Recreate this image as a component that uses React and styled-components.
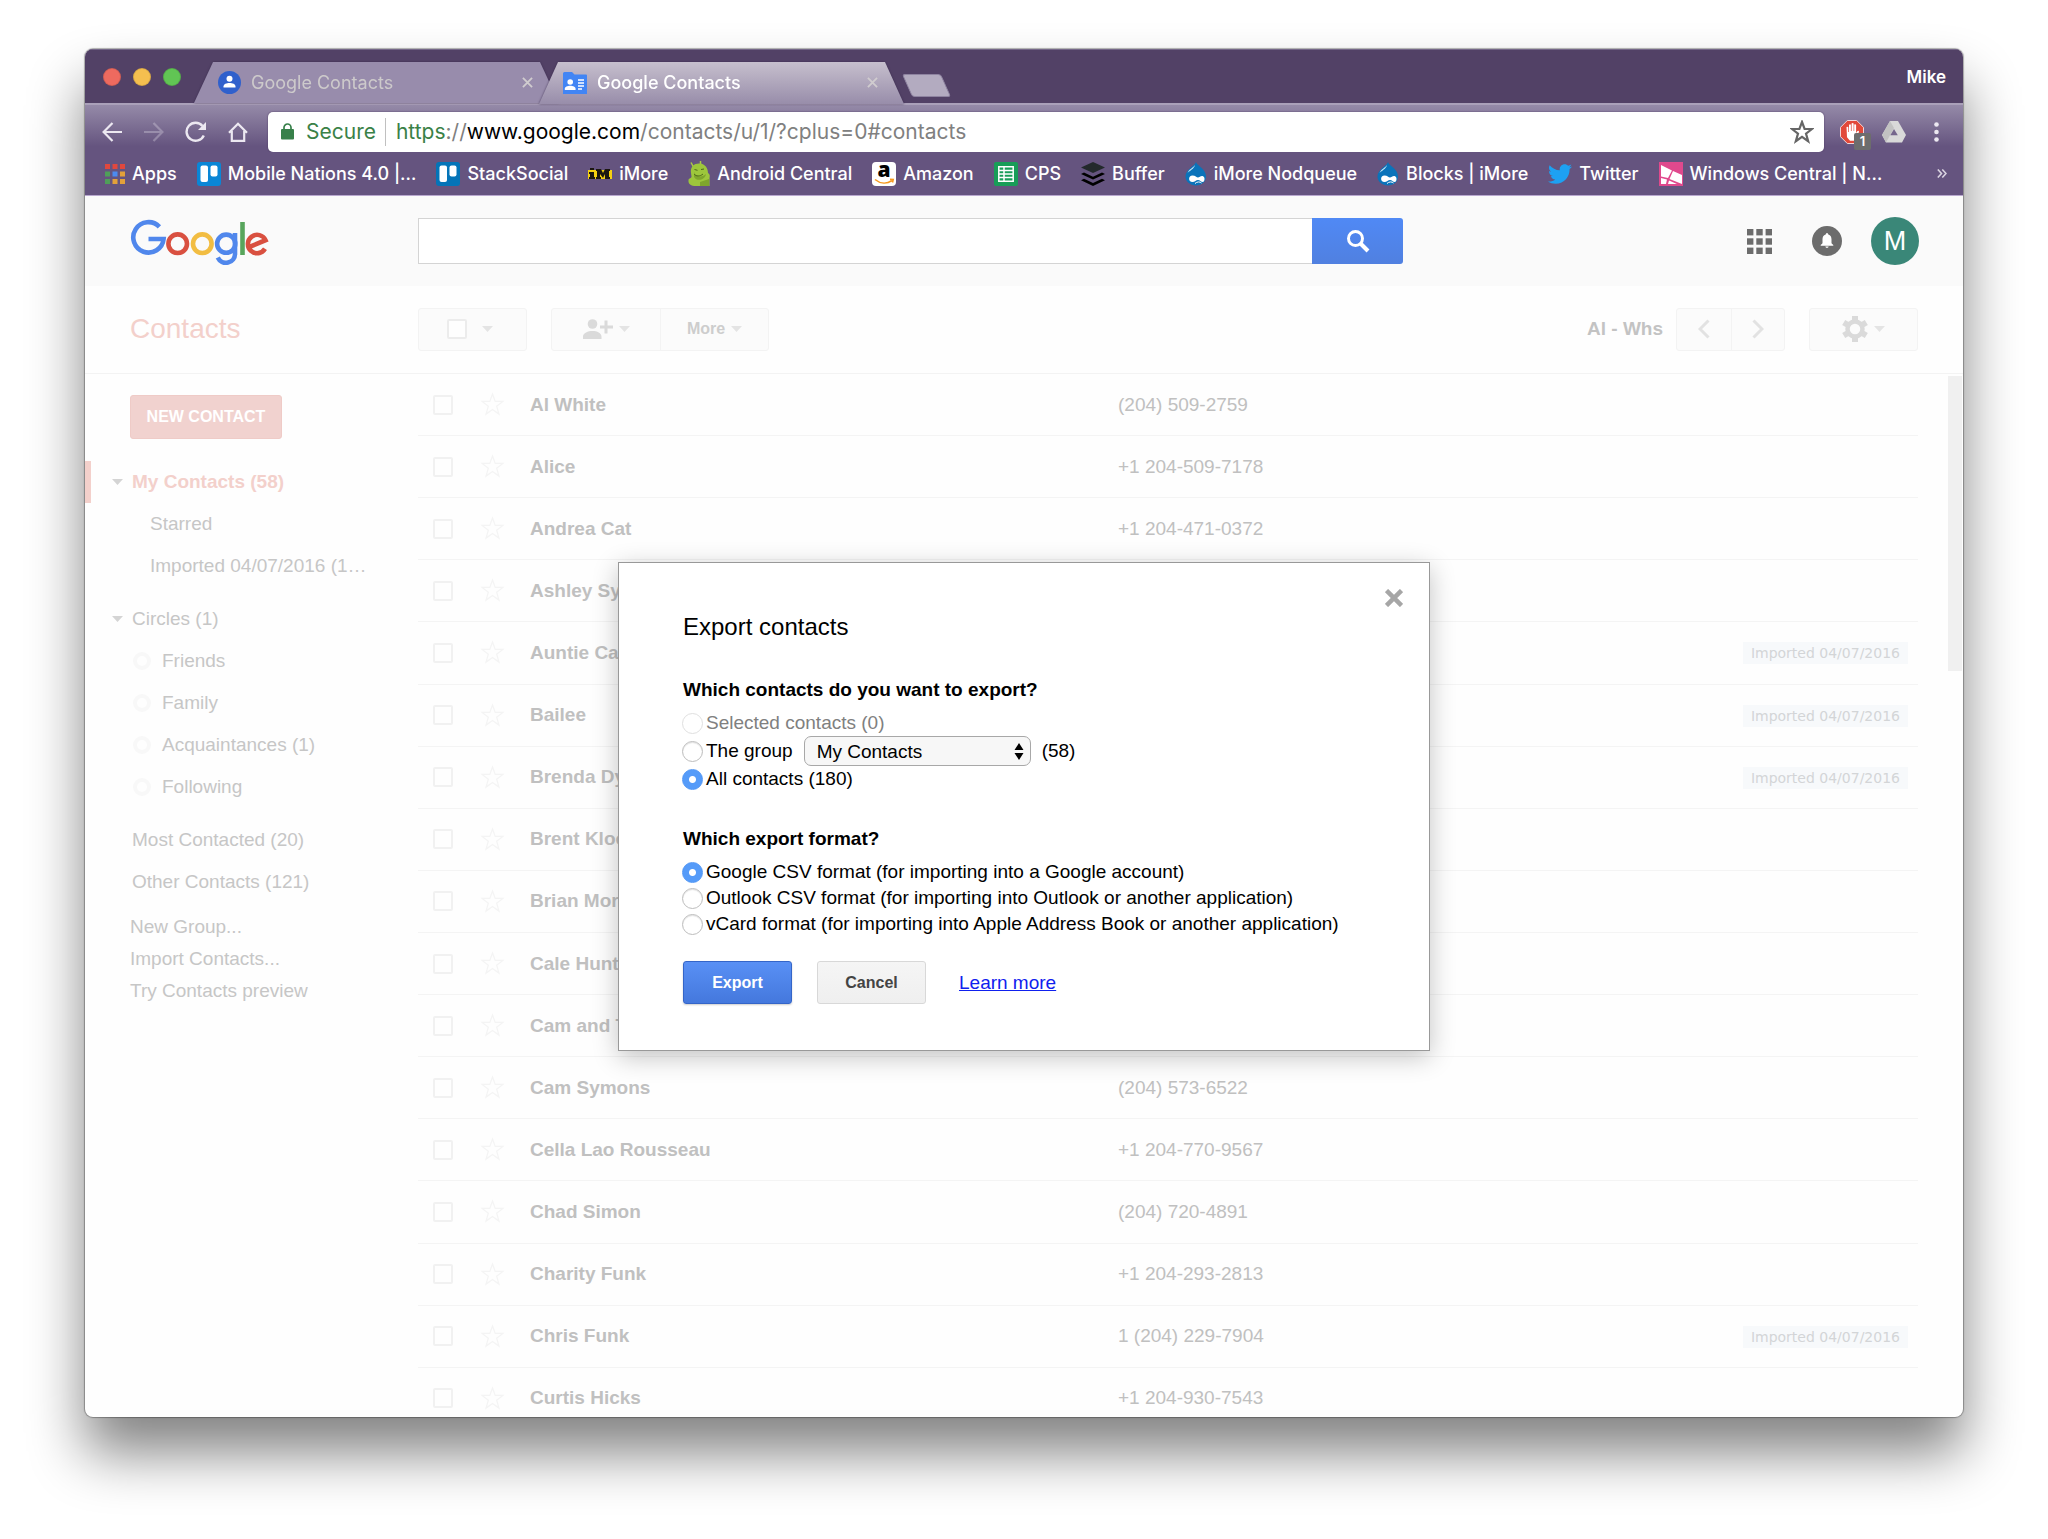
import React from "react";
import styled, { createGlobalStyle, css } from "styled-components";
import { FaTwitter } from "react-icons/fa";

const sans = `"Liberation Sans", Arial, sans-serif`;
const ui = `Inter, Roboto, sans-serif`;

const GlobalStyle = createGlobalStyle`
  *, *::before, *::after { box-sizing: border-box; }
  html, body { margin: 0; background: #fff; }
  body { font-family: ${sans}; font-size: 19px; color: #000; }
  button, input, select { font: inherit; margin: 0; }
  a { color: inherit; text-decoration: none; }
  h1, h2, h3, p, ul { margin: 0; padding: 0; font-weight: normal; }
  ul { list-style: none; }
  svg { display: block; flex: none; }
`;

/* ---------- window ---------- */

const Desktop = styled.div`
  height: 100vh;
  min-height: 1100px;
  padding: 49px 85px 122px;
  overflow: hidden;
`;

const Window = styled.div`
  display: flex;
  flex-direction: column;
  height: 100%;
  border-radius: 8px;
  overflow: hidden;
  background: #fefefe;
  box-shadow: 0 0 1px 1px rgba(0, 0, 0, 0.3), 0 36px 56px rgba(0, 0, 0, 0.49);
`;

const TitleBar = styled.header`
  display: flex;
  align-items: flex-end;
  height: 54px;
  flex: none;
  padding: 0 17px 0 18px;
  background: #524166;
  border-top: 1px solid #746788;
  font-family: ${ui};
  font-size: 18px;
`;

const Lights = styled.div`
  display: flex;
  gap: 12px;
  align-self: center;
  margin-right: 13px;
`;

const Light = styled.button`
  width: 18px;
  height: 18px;
  padding: 0;
  border: 1px solid rgba(0, 0, 0, 0.12);
  border-radius: 50%;
  background: ${(p) => p.$color};
`;

const Tab = styled.div`
  position: relative;
  isolation: isolate;
  display: flex;
  align-items: center;
  gap: 10px;
  width: 365px;
  height: 41px;
  padding: 0 26px 0 24px;
  color: ${(p) => (p.$active ? "#fff" : "#cdcacb")};
  filter: drop-shadow(0 0 1px rgba(50, 35, 70, 0.7));

  & + & {
    margin-left: -20px;
  }

  &::before {
    content: "";
    position: absolute;
    inset: 0 0 ${(p) => (p.$active ? "-1px" : "0")} 0;
    z-index: -1;
    background: ${(p) => (p.$active ? "linear-gradient(#c6bfcd, #988daa)" : "#988cac")};
    clip-path: polygon(0 100%, 19px 0, calc(100% - 19px) 0, 100% 100%);
  }
`;

const TabTitle = styled.span`
  flex: 1;
  font-weight: ${(p) => (p.$active ? 500 : 400)};
`;

const PlainButton = styled.button`
  display: flex;
  align-items: center;
  justify-content: center;
  padding: 0;
  border: 0;
  background: none;
  color: inherit;
`;

const NewTab = styled.button`
  width: 39px;
  height: 23px;
  margin: 0 0 6px 3px;
  padding: 0;
  border: 1px solid #8e83a0;
  border-radius: 3px;
  background: #b3abc0;
  transform: skewX(24deg);
`;

const Profile = styled.span`
  margin-left: auto;
  align-self: center;
  color: #fff;
  font-size: 17px;
  font-weight: 600;
`;

const NavBar = styled.nav`
  display: flex;
  align-items: center;
  flex: none;
  height: 49px;
  padding: 6px 6px 0;
  background: linear-gradient(#958aa8, #65547f 88%);
  border-top: 2px solid #aaa0b9;
  font-family: ${ui};
  font-size: 21px;
  color: #ece8f1;
  white-space: nowrap;
`;

const NavButton = styled(PlainButton)`
  width: 42px;
  height: 40px;
  flex: none;
  opacity: ${(p) => (p.disabled ? 0.3 : 1)};
  color: inherit;
`;

const AddressBar = styled.div`
  display: flex;
  align-items: center;
  flex: 1;
  height: 40px;
  margin: 0 7px 0 9px;
  padding: 0 10px 0 13px;
  border-radius: 5px;
  background: #fff;
  box-shadow: 0 0 1px 1px rgba(80, 60, 100, 0.3);
  line-height: 28px;
`;

const Secure = styled.span`
  padding: 0 9px 0 12px;
  margin-right: 10px;
  border-right: 1px solid #c0c0c0;
  color: #3a8147;
`;

const Address = styled.span`
  flex: 1;
  color: #808080;

  b {
    font-weight: 400;
    color: #000;
  }
  i {
    font-style: normal;
    color: #3a8147;
  }
`;

const Blocker = styled(NavButton)`
  position: relative;
`;

const Count = styled.span`
  position: absolute;
  right: 2px;
  bottom: 2px;
  width: 17px;
  height: 17px;
  border-radius: 2px;
  background: #6d6d6d;
  color: #fff;
  font-size: 13px;
  font-weight: 600;
  line-height: 17px;
`;

const Bookmarks = styled.nav`
  display: flex;
  align-items: center;
  flex: none;
  height: 44px;
  padding: 0 16px 0 20px;
  background: #65547f;
  border-bottom: 1px solid #b9a8cf;
  font-family: ${ui};
  font-size: 18px;
  font-weight: 500;
  color: #fff;
  white-space: nowrap;
`;

const Bookmark = styled.a`
  display: flex;
  align-items: center;
  gap: 7px;
  margin-right: 20px;
`;

const MoreBookmarks = styled(PlainButton)`
  margin-left: auto;
`;

/* ---------- page ---------- */

const Page = styled.div`
  position: relative;
  display: flex;
  flex-direction: column;
  flex: 1;
  min-height: 0;
`;

const PageHeader = styled.header`
  display: flex;
  align-items: center;
  flex: none;
  height: 90px;
  padding-right: 44px;
  background: #fafafa;
`;

const Side = styled.div`
  width: 333px;
  flex: none;
  padding-left: 45px;
`;

const Search = styled.form`
  display: flex;
  flex: 0 1 985px;
  height: 46px;
`;

const SearchInput = styled.input`
  flex: 1;
  min-width: 0;
  padding: 0 12px;
  border: 1px solid #d4d4d4;
  border-right: 0;
  outline: 0;
  background: #fff;
`;

const SearchButton = styled(PlainButton)`
  width: 91px;
  border-radius: 0 3px 3px 0;
  background: linear-gradient(#5089f5, #5080e0);
  color: #fff;
`;

const Account = styled.div`
  display: flex;
  gap: 20px;
  margin-left: auto;
`;

const RoundButton = styled(PlainButton)`
  width: 48px;
  height: 48px;
  border-radius: 50%;
  background: ${(p) => p.$fill || "none"};
  color: #fff;
  font-size: 27px;
`;

const Toolbar = styled.div`
  display: flex;
  align-items: center;
  flex: none;
  height: 88px;
  padding: 0 45px 1px 0;
  border-bottom: 1px solid #f3f3f3;
`;

const PageTitle = styled.h1`
  font-size: 28px;
  color: #f3d0cb;
`;

const Group = styled.div`
  display: flex;
  align-items: center;
  justify-content: center;
  height: 43px;
  min-width: 109px;
  margin-right: ${(p) => p.$after || 0}px;
  border: 1px solid #f3f3f3;
  border-radius: 3px;
  background: #fbfbfb;
  color: #cdcdcd;
`;

const GroupButton = styled(PlainButton)`
  gap: 6px;
  width: ${(p) => p.$width}px;
  height: 100%;
  font-size: 16px;
  font-weight: bold;

  & + & {
    border-left: 1px solid #f3f3f3;
  }
`;

const CaretButton = styled(PlainButton)`
  height: 100%;
  padding-right: 6px;
`;

const Range = styled.span`
  margin: 0 13px 0 auto;
  font-weight: bold;
  color: #c3c3c3;
`;

const Check = styled.input`
  appearance: none;
  display: block;
  width: 20px;
  height: 20px;
  border: 2px solid #f1f1f1;
  border-radius: 2px;
  background: #fefefe;
`;

const SelectAll = styled(Check)`
  margin-right: 15px;
  border-color: #ececec;
`;

const Body = styled.div`
  position: relative;
  display: flex;
  flex: 1;
  min-height: 0;
  overflow: hidden;
`;

const Sidebar = styled.aside`
  width: 333px;
  flex: none;
  padding-top: 21px;
  color: #c6c6c6;
`;

const NewContact = styled.button`
  height: 44px;
  width: 152px;
  margin: 0 0 22px 45px;
  padding: 0;
  border: 1px solid #efcbc7;
  border-radius: 3px;
  background: #f1d2cf;
  color: #fff;
  font-size: 16px;
  font-weight: bold;
`;

const NavList = styled.ul`
  margin-bottom: ${(p) => p.$after}px;
`;

const NavItem = styled.li`
  display: flex;
  align-items: center;
  height: ${(p) => (p.$short ? 32 : 42)}px;
  padding-left: ${(p) => p.$indent}px;
  ${(p) =>
    p.$current &&
    css`
      padding-left: 21px;
      border-left: 6px solid #f3d0cb;
      font-weight: bold;
      color: #f3d0cb;
    `}
`;

const Twisty = styled.svg`
  margin-right: 9px;
  color: #d4d4d4;
`;

const Ring = styled.span`
  width: 18px;
  height: 18px;
  margin-right: 11px;
  border: 4px solid #f8f8f8;
  border-radius: 50%;
`;

const List = styled.main`
  flex: 1;
  min-width: 0;
  margin-right: 45px;
`;

const Table = styled.table`
  width: 100%;
  height: calc(100% + 13px);
  border-spacing: 0;
  table-layout: fixed;
  color: #c0c0c0;

  td {
    padding: 0;
    border-bottom: 1px solid #f4f4f4;
  }
`;

const Name = styled.td`
  font-weight: bold;
`;

const CheckCell = styled.td`
  && {
    padding-left: 15px;
  }
`;

const TagCell = styled.td`
  && {
    padding-right: 10px;
    text-align: right;
  }
`;

const Tag = styled.span`
  display: inline-block;
  padding: 0 8px;
  background: #f7f9fb;
  color: #d3d5d7;
  font-family: "DejaVu Sans", sans-serif;
  font-size: 14px;
  line-height: 22px;
  vertical-align: middle;
`;

const ScrollThumb = styled.div`
  position: absolute;
  top: 2px;
  right: 1px;
  width: 14px;
  height: 295px;
  background: #f0f0f0;
`;

/* ---------- dialog ---------- */

const Overlay = styled.div`
  position: absolute;
  inset: 0;
  display: grid;
  place-items: center;
`;

const Dialog = styled.form`
  position: relative;
  width: 812px;
  padding: 48px 64px 46px;
  border: 1px solid #999;
  background: #fff;
  box-shadow: 0 6px 24px rgba(0, 0, 0, 0.24);
`;

const Close = styled(PlainButton)`
  position: absolute;
  top: 26px;
  right: 26px;
  width: 18px;
  height: 18px;
`;

const DialogTitle = styled.h2`
  font-size: 24px;
  line-height: 32px;
`;

const Choices = styled.fieldset`
  min-width: 0;
  margin: 35px 0 0;
  padding: 0;
  border: 0;
`;

const Question = styled.legend`
  padding: 0;
  margin-bottom: 8px;
  font-weight: bold;
  line-height: 24px;
`;

const Choice = styled.div`
  display: flex;
  align-items: center;
  height: ${(p) => (p.$tall ? 30 : 26)}px;
  color: ${(p) => (p.$off ? "#808080" : "#000")};
`;

const Radio = styled.input`
  appearance: none;
  width: 21px;
  height: 21px;
  flex: none;
  margin: 0 3px 0 -1px;
  border: 1px solid #bdbdbd;
  border-radius: 50%;
  background: #fff;
  box-shadow: inset 0 1px 1px rgba(0, 0, 0, 0.12);

  &:checked {
    border-color: #5096f5;
    background: radial-gradient(circle, #fff 3px, #559bf9 4px);
    box-shadow: none;
  }

  &:disabled {
    border-color: #e0e0e0;
    box-shadow: none;
  }
`;

const SelectWrap = styled.div`
  position: relative;
  width: 227px;
  margin: 0 11px;

  svg {
    position: absolute;
    top: 7px;
    right: 7px;
    pointer-events: none;
  }
`;

const Select = styled.select`
  appearance: none;
  display: block;
  width: 100%;
  height: 30px;
  padding: 0 12px;
  border: 1px solid #a8a8a8;
  border-radius: 7px;
  background: #f7f7f7;
  color: #000;
`;

const Actions = styled.div`
  display: flex;
  align-items: center;
  margin-top: 24px;
`;

const ActionButton = styled.button`
  width: 109px;
  height: 43px;
  margin-right: 25px;
  padding: 0;
  border-radius: 3px;
  font-size: 16px;
  font-weight: bold;
  ${(p) =>
    p.$primary
      ? css`
          border: 1px solid #3465c8;
          background: linear-gradient(#5990f5, #4478dd);
          color: #fff;
          box-shadow: 0 1px 2px rgba(0, 0, 0, 0.2);
        `
      : css`
          border: 1px solid #d8d8d8;
          background: linear-gradient(#f5f5f5, #efefef);
          color: #444;
        `}
`;

const Learn = styled.a`
  margin-left: 8px;
  color: #0f20ee;
  text-decoration: underline;
`;

/* ---------- drawings ---------- */

const CrossIcon = ({ size = 11, width = 2, color = "#d0cccf" }) => (
  <svg width={size} height={size} viewBox="0 0 12 12" stroke={color} strokeWidth={width}>
    <path d="M1 1l10 10M11 1L1 11" />
  </svg>
);

const Caret = ({ color = "#e4e4e4" }) => (
  <svg width="11" height="6" viewBox="0 0 11 6" fill={color}>
    <path d="M0 0h11L5.500 6z" />
  </svg>
);

const GoogleLogo = () => (
  <svg width="140" height="50" viewBox="0 -3 140 50" fill="none" strokeWidth="4.600" role="img" aria-label="Google">
    <path stroke="#5087ec" d="M29.400 7.800A15.200 15.200 0 1 0 33.600 20H18.500" />
    <circle stroke="#d95040" cx="47.700" cy="24.700" r="9.300" />
    <circle stroke="#f2bd42" cx="72.300" cy="24.700" r="9.300" />
    <circle stroke="#5087ec" cx="96.200" cy="24.700" r="9.100" />
    <path stroke="#5087ec" d="M105 14v20.500a9 9 0 0 1-17.200 4" />
    <path stroke="#58a55c" d="M112.500 3v33" />
    <path stroke="#d95040" d="M118.900 28.200l16.600-7A9.200 9.200 0 1 0 135 29.800" />
  </svg>
);

const PersonIcon = () => (
  <svg width="23" height="23" viewBox="0 0 23 23">
    <circle cx="11.500" cy="11.500" r="11.500" fill="#3060cc" />
    <circle cx="11.500" cy="7.800" r="3" fill="#fff" />
    <path fill="#fff" d="M5.500 16.500v-1c0-2.400 3-3.500 6-3.500s6 1.100 6 3.500v1z" />
  </svg>
);

const FolderIcon = () => (
  <svg width="24" height="22" viewBox="0 0 24 22">
    <path fill="#4285f4" d="M0 1.500Q0 0 1.500 0H9l2.500 2.500H23q1 0 1 1V22H0z" />
    <circle cx="7.200" cy="10" r="2.800" fill="#fff" />
    <path fill="#fff" d="M1.800 18v-1.200c0-2 2.700-3 5.400-3s5.400 1 5.400 3V18zM15 7.200h6v1.600h-6zM15 10.200h6v1.600h-6zM15 13.200h6v1.600h-6zM15 16.200h4v1.600h-4z" />
  </svg>
);

const grid9 = [0, 1, 2, 3, 4, 5, 6, 7, 8];

const AppsIcon = () => {
  const colors = ["#e0483e", "#e0483e", "#e0483e", "#4f9f59", "#4c8bf0", "#e3a13a", "#4f9f59", "#e3a13a", "#e3a13a"];
  return (
    <svg width="20" height="20" viewBox="0 0 20 20">
      {grid9.map((i) => (
        <rect key={i} x={(i % 3) * 7.5} y={Math.floor(i / 3) * 7.5} width="5" height="5" fill={colors[i]} />
      ))}
    </svg>
  );
};

const GridIcon = () => (
  <svg width="25" height="25" viewBox="0 0 25 25" fill="#6c6c6c">
    {grid9.map((i) => (
      <rect key={i} x={(i % 3) * 9.3} y={Math.floor(i / 3) * 9.3} width="6.400" height="6.400" />
    ))}
  </svg>
);

const BoardIcon = ({ dark }) => (
  <svg width="24" height="24" viewBox="0 0 24 24">
    <rect width="24" height="24" rx="3" fill={dark ? "#0474b8" : "#0a86d6"} />
    <rect x="3.500" y="3.500" width="7.500" height="16.500" rx="2" fill="#fff" />
    <rect x="13.500" y="3.500" width="7" height="11" rx="2" fill="#fff" />
  </svg>
);

const ImoreIcon = () => (
  <svg width="24" height="12" viewBox="0 0 24 12" aria-hidden="true">
    <rect y="2" width="24" height="9" fill="#f5d010" />
    <path fill="#1c1710" d="M2 0h4v2H2zM1 4h5v5h1v2H1V9h1V6H1zM8 1h5l2 4 2-4h5v2h-1v6h1v2h-5V6l-2 4-3-4v3h1v2H8V9h1V3H8z" />
  </svg>
);

const AndroidIcon = () => (
  <svg width="22" height="25" viewBox="0 0 22 25">
    <path d="M5.500 6L3 1.500M12.500 3V0" stroke="#a9cc45" strokeWidth="1.500" />
    <path fill="#9dc63c" d="M3 12C2 5 7 2 12 2.500c5 .5 8 4.500 8 9.500 2 1 2 3 1.500 5V25H8c-5 0-8-2-7.500-6 .3-2 3-1.500 3-3.500z" />
    <path fill="#7fa52d" d="M6 11c1 5 8 6 12 2-1 6-9 8-12 3zM12 21l9-3v7h-9z" />
    <path stroke="#4e691b" strokeWidth="1" fill="none" d="M6.500 8.500l3 .8M13 8.500l3-.5M6 13c2 2.500 6 2.700 9 0" />
  </svg>
);

const AmazonIcon = () => (
  <svg width="24" height="24" viewBox="0 0 24 24">
    <rect width="24" height="24" rx="4" fill="#fff" />
    <text x="12" y="15" textAnchor="middle" fontFamily="Open Sans, sans-serif" fontWeight="800" fontSize="21">a</text>
    <path d="M3 17.500c5.500 4.500 12 4.500 17 1M18 17.300l3.200.2-.7 3" fill="none" stroke="#f79a1e" strokeWidth="1.600" />
  </svg>
);

const SheetIcon = () => (
  <svg width="24" height="24" viewBox="0 0 24 24">
    <rect width="24" height="24" rx="2" fill="#189d58" />
    <path d="M4.800 4.800h14.400v14.400H4.800zM4.800 8.500h14.400M4.800 12h14.400M4.800 15.500h14.400M10 4.800v14.400" fill="none" stroke="#fff" strokeWidth="1.500" />
  </svg>
);

const StackIcon = () => (
  <svg width="24" height="24" viewBox="0 0 24 24">
    <path fill="#23292c" d="M12 0l12 5.500L12 11 0 5.500z" />
    <path fill="#000" d="M0 12l3-1.500 9 4.200 9-4.200 3 1.500-12 5.500zM0 18.300l3-1.500 9 4.200 9-4.200 3 1.500L12 24z" />
  </svg>
);

const DropIcon = () => (
  <svg width="22" height="24" viewBox="0 0 22 24">
    <path fill="#0a73ba" d="M11 0c1 4 10 6.500 10 14.500C21 20 16.500 23.500 11 23.500S.5 20 .5 14.500C.5 7 10 4 11 0z" />
    <path fill="#c9e5f5" d="M10 3C8 6 4 7 2.500 11 5 8.500 9 7 10 3z" />
    <path fill="#fff" d="M7.500 13.500c3 0 4 2 5.500 2 1.400 0 2.500-1.800 4.500-1.500 3 .5 2.300 6 .3 6-2 0-2.800-2-4.800-2s-3 2-5.500 2c-4.500 0-4.500-6.500 0-6.500z" />
    <path fill="none" stroke="#fff" strokeWidth="1" d="M10 21.500c2-2 5-2 6.500-.5" />
  </svg>
);

const PinkIcon = () => (
  <svg width="24" height="24" viewBox="0 0 24 24">
    <rect width="24" height="24" fill="#e0498d" />
    <path fill="#fff" d="M2 3l11 5.500L9 16 2 14.500zM14 9l9 4v9L10.500 17zM2 16l6 1.500L7 22H2zM10 18.500l8 3.500H9z" />
  </svg>
);

const StarIcon = ({ size, color, width }) => (
  <svg width={size} height={size} viewBox="0 0 24 24" fill="none" stroke={color} strokeWidth={width}>
    <path d="M12 2l2.600 7H22l-6 4.600 2.200 7.600L12 16.800l-6.200 4.400L8 13.600 2 9h7.400z" />
  </svg>
);

const PagerIcon = ({ next }) => (
  <svg width="12" height="20" viewBox="0 0 12 20" fill="none" stroke="#e2e2e2" strokeWidth="3">
    <path d={next ? "M1.500 1.500L10 10l-8.500 8.500" : "M10.500 1.500L2 10l8.500 8.500"} />
  </svg>
);

/* ---------- data ---------- */

const imported = "Imported 04/07/2016";
const contacts = [
  ["Al White", "(204) 509-2759"],
  ["Alice", "+1 204-509-7178"],
  ["Andrea Cat", "+1 204-471-0372"],
  ["Ashley Sy", ""],
  ["Auntie Ca", "", imported],
  ["Bailee", "", imported],
  ["Brenda Dy", "", imported],
  ["Brent Kloo", ""],
  ["Brian Mor", ""],
  ["Cale Hunt", ""],
  ["Cam and T", ""],
  ["Cam Symons", "(204) 573-6522"],
  ["Cella Lao Rousseau", "+1 204-770-9567"],
  ["Chad Simon", "(204) 720-4891"],
  ["Charity Funk", "+1 204-293-2813"],
  ["Chris Funk", "1 (204) 229-7904", imported],
  ["Curtis Hicks", "+1 204-930-7543"],
];

const bookmarks = [
  ["Apps", <AppsIcon />],
  ["Mobile Nations 4.0 |…", <BoardIcon />],
  ["StackSocial", <BoardIcon dark />],
  ["iMore", <ImoreIcon />],
  ["Android Central", <AndroidIcon />],
  ["Amazon", <AmazonIcon />],
  ["CPS", <SheetIcon />],
  ["Buffer", <StackIcon />],
  ["iMore Nodqueue", <DropIcon />],
  ["Blocks | iMore", <DropIcon />],
  ["Twitter", <FaTwitter size={24} color="#1da1f2" />],
  ["Windows Central | N…", <PinkIcon />],
];

const circles = ["Friends", "Family", "Acquaintances (1)", "Following"];

/* ---------- sections ---------- */

const BrowserChrome = () => (
  <>
    <TitleBar>
      <Lights>
        <Light $color="#ee6a5f" aria-label="Close window" />
        <Light $color="#f5bf4f" aria-label="Minimize window" />
        <Light $color="#61c554" aria-label="Zoom window" />
      </Lights>
      <Tab>
        <PersonIcon />
        <TabTitle>Google Contacts</TabTitle>
        <PlainButton aria-label="Close tab"><CrossIcon /></PlainButton>
      </Tab>
      <Tab $active>
        <FolderIcon />
        <TabTitle $active>Google Contacts</TabTitle>
        <PlainButton aria-label="Close tab"><CrossIcon /></PlainButton>
      </Tab>
      <NewTab aria-label="New tab" />
      <Profile>Mike</Profile>
    </TitleBar>
    <NavBar>
      <NavButton aria-label="Back">
        <svg width="20" height="20" viewBox="0 0 20 20" fill="none" stroke="currentColor" strokeWidth="2.200">
          <path d="M10.500 1L1.600 10l8.900 9M1.500 10H20" />
        </svg>
      </NavButton>
      <NavButton aria-label="Forward" disabled>
        <svg width="20" height="20" viewBox="0 0 20 20" fill="none" stroke="currentColor" strokeWidth="2.200">
          <path d="M9.500 1l8.900 9-8.900 9M18.500 10H0" />
        </svg>
      </NavButton>
      <NavButton aria-label="Reload">
        <svg width="22" height="22" viewBox="0 0 22 22" fill="none" stroke="currentColor" strokeWidth="2.400">
          <path d="M18.800 14.500A9 9 0 1 1 17.500 5" />
          <path fill="currentColor" stroke="none" d="M21 1v8h-8z" />
        </svg>
      </NavButton>
      <NavButton aria-label="Home">
        <svg width="20" height="20" viewBox="0 0 20 20" fill="none" stroke="currentColor" strokeWidth="2.200">
          <path d="M1 10.800L10 1.700l9 9.100M3.800 9v9.800h12.400V9" />
        </svg>
      </NavButton>
      <AddressBar>
        <svg width="13" height="17" viewBox="0 0 13 17" fill="none">
          <rect y="6" width="13" height="10.500" rx="1" fill="#37804a" />
          <path d="M3 7V4.500a3.500 3.500 0 0 1 7 0V7" stroke="#37804a" strokeWidth="1.700" />
        </svg>
        <Secure>Secure</Secure>
        <Address><i>https</i>://<b>www.google.com</b>/contacts/u/1/?cplus=0#contacts</Address>
        <PlainButton aria-label="Bookmark this page"><StarIcon size={24} color="#666" width={2.2} /></PlainButton>
      </AddressBar>
      <Blocker aria-label="Ad blocker">
        <svg width="24" height="24" viewBox="0 0 24 24">
          <path fill="#e2493a" stroke="#f0d5d6" d="M7.300.5h9.400l6.800 6.800v9.400l-6.800 6.800H7.300L.5 16.700V7.300z" />
          <path fill="#fff" d="M6.500 7q1.300-.8 1.800.3V12h.7V4.700q1.200-1 1.900 0V11h.7V3.500q1.200-1 2 0V11h.6V4.500q1.200-.8 1.900.2V13l1.400-2q1.500-.6 1.500.7l-2.400 6-2.600 3h-4l-3-3.500z" />
        </svg>
        <Count>1</Count>
      </Blocker>
      <NavButton aria-label="Drive">
        <svg width="24" height="22" viewBox="0 0 24 22">
          <path fill="#d9d9d9" d="M8 0h8l8 14-4 7.500H4L0 14z" />
          <path fill="#c2c2c2" d="M8 0l4 7-8 14.500L0 14z" />
          <path fill="#75668c" d="M12 8l3.800 6.300H8.300z" />
        </svg>
      </NavButton>
      <NavButton aria-label="Menu">
        <svg width="5" height="20" viewBox="0 0 5 20" fill="currentColor">
          <circle cx="2.500" cy="2.500" r="2.300" /><circle cx="2.500" cy="10" r="2.300" /><circle cx="2.500" cy="17.500" r="2.300" />
        </svg>
      </NavButton>
    </NavBar>
    <Bookmarks>
      {bookmarks.map(([label, icon]) => (
        <Bookmark href="#" key={label}>{icon}{label}</Bookmark>
      ))}
      <MoreBookmarks aria-label="More bookmarks">
        <svg width="10" height="9" viewBox="0 0 10 9" fill="none" stroke="#d8d2e0" strokeWidth="1.600">
          <path d="M.8.5l3.700 4-3.700 4M5.300.5L9 4.500l-3.700 4" />
        </svg>
      </MoreBookmarks>
    </Bookmarks>
  </>
);

const ContactsHeader = () => (
  <>
    <PageHeader>
      <Side><GoogleLogo /></Side>
      <Search onSubmit={(e) => e.preventDefault()}>
        <SearchInput type="text" aria-label="Search contacts" />
        <SearchButton type="submit" aria-label="Search">
          <svg width="24" height="24" viewBox="0 0 24 24" fill="none" stroke="#fff">
            <circle cx="9.500" cy="9.500" r="7" strokeWidth="3" />
            <path d="M14 14l8 8" strokeWidth="4" />
          </svg>
        </SearchButton>
      </Search>
      <Account>
        <RoundButton aria-label="Google apps"><GridIcon /></RoundButton>
        <RoundButton aria-label="Notifications">
          <svg width="30" height="30" viewBox="0 0 30 30">
            <circle cx="15" cy="15" r="15" fill="#6c6c6c" />
            <path fill="#fff" d="M15 7q1.300 0 1.300 1.500c2.300.8 3.200 2.500 3.200 4.800v3.900l1.800 1.800v.8H8.700V19l1.800-1.800v-3.900c0-2.300.9-4 3.200-4.800Q13.700 7 15 7zM13.300 20.500h3.400q-.3 1.400-1.700 1.400t-1.700-1.400z" />
          </svg>
        </RoundButton>
        <RoundButton $fill="#3a8778">M</RoundButton>
      </Account>
    </PageHeader>
    <Toolbar>
      <Side><PageTitle>Contacts</PageTitle></Side>
      <Group $after={24}>
        <SelectAll type="checkbox" aria-label="Select all" />
        <CaretButton aria-label="Selection options"><Caret /></CaretButton>
      </Group>
      <Group>
        <GroupButton $width={108} aria-label="Add to group">
          <svg width="30" height="20" viewBox="0 0 30 20" fill="#dadada">
            <circle cx="9.500" cy="5" r="4.800" />
            <path d="M0 20v-2.500C0 14 5 12 9.500 12s9 2 9 5.500V20zM21.500 1.500h3v5H30v3h-5.500v5h-3v-5H17v-3h4.500z" />
          </svg>
          <Caret />
        </GroupButton>
        <GroupButton $width={108}>More<Caret /></GroupButton>
      </Group>
      <Range>Al - Whs</Range>
      <Group $after={24}>
        <GroupButton $width={53} aria-label="Previous page"><PagerIcon /></GroupButton>
        <GroupButton $width={53} aria-label="Next page"><PagerIcon next /></GroupButton>
      </Group>
      <Group>
        <GroupButton $width={107} aria-label="Settings">
          <svg width="26" height="26" viewBox="0 0 26 26" fill="none" stroke="#dadada">
            <circle cx="13" cy="13" r="7.500" strokeWidth="4.500" />
            <path strokeWidth="6" d="M13 0v5M13 21v5M1.700 6.500L6 9M20 17l4.300 2.500M1.700 19.500L6 17M20 9l4.300-2.500" />
          </svg>
          <Caret />
        </GroupButton>
      </Group>
    </Toolbar>
  </>
);

const TwistyIcon = () => (
  <Twisty width="11" height="6" viewBox="0 0 11 6" fill="currentColor"><path d="M0 0h11L5.500 6z" /></Twisty>
);

const SideNav = () => (
  <Sidebar>
    <NewContact>NEW CONTACT</NewContact>
    <NavList $after={11}>
      <NavItem $current><TwistyIcon /><a href="#">My Contacts (58)</a></NavItem>
      <NavItem $indent={65}><a href="#">Starred</a></NavItem>
      <NavItem $indent={65}><a href="#">Imported 04/07/2016 (1…</a></NavItem>
    </NavList>
    <NavList $after={11}>
      <NavItem $indent={27}><TwistyIcon /><a href="#">Circles (1)</a></NavItem>
      {circles.map((name) => (
        <NavItem $indent={48} key={name}><Ring /><a href="#">{name}</a></NavItem>
      ))}
    </NavList>
    <NavList $after={8}>
      <NavItem $indent={47}><a href="#">Most Contacted (20)</a></NavItem>
      <NavItem $indent={47}><a href="#">Other Contacts (121)</a></NavItem>
    </NavList>
    <NavList $after={0}>
      <NavItem $short $indent={45}><a href="#">New Group...</a></NavItem>
      <NavItem $short $indent={45}><a href="#">Import Contacts...</a></NavItem>
      <NavItem $short $indent={45}><a href="#">Try Contacts preview</a></NavItem>
    </NavList>
  </Sidebar>
);

const ContactList = () => (
  <List>
    <Table>
      <colgroup>
        <col width="62" /><col width="50" /><col width="588" /><col /><col width="200" />
      </colgroup>
      <tbody>
        {contacts.map(([name, phone, tag]) => (
          <tr key={name}>
            <CheckCell><Check type="checkbox" aria-label={name} /></CheckCell>
            <td><StarIcon size={25} color="#f4f4f4" width={1.2} /></td>
            <Name>{name}</Name>
            <td>{phone}</td>
            <TagCell>{tag && <Tag>{tag}</Tag>}</TagCell>
          </tr>
        ))}
      </tbody>
    </Table>
  </List>
);

const ExportDialog = () => (
  <Overlay>
    <Dialog role="dialog" aria-labelledby="export-title" onSubmit={(e) => e.preventDefault()}>
      <Close type="button" aria-label="Close"><CrossIcon size={18} width={3} color="#a6a6a6" /></Close>
      <DialogTitle id="export-title">Export contacts</DialogTitle>
      <Choices>
        <Question>Which contacts do you want to export?</Question>
        <Choice $off>
          <Radio type="radio" name="which" id="selected" disabled />
          <label htmlFor="selected">Selected contacts (0)</label>
        </Choice>
        <Choice $tall>
          <Radio type="radio" name="which" id="group" />
          <label htmlFor="group">The group</label>
          <SelectWrap>
            <Select aria-label="Group" defaultValue="my">
              <option value="my">My Contacts</option>
            </Select>
            <svg width="10" height="17" viewBox="0 0 10 17"><path d="M5 0l4.500 7h-9zM5 17l4.500-7h-9z" /></svg>
          </SelectWrap>
          <span>(58)</span>
        </Choice>
        <Choice>
          <Radio type="radio" name="which" id="all" defaultChecked />
          <label htmlFor="all">All contacts (180)</label>
        </Choice>
      </Choices>
      <Choices>
        <Question>Which export format?</Question>
        <Choice>
          <Radio type="radio" name="format" id="google" defaultChecked />
          <label htmlFor="google">Google CSV format (for importing into a Google account)</label>
        </Choice>
        <Choice>
          <Radio type="radio" name="format" id="outlook" />
          <label htmlFor="outlook">Outlook CSV format (for importing into Outlook or another application)</label>
        </Choice>
        <Choice>
          <Radio type="radio" name="format" id="vcard" />
          <label htmlFor="vcard">vCard format (for importing into Apple Address Book or another application)</label>
        </Choice>
      </Choices>
      <Actions>
        <ActionButton $primary type="submit">Export</ActionButton>
        <ActionButton type="button">Cancel</ActionButton>
        <Learn href="#">Learn more</Learn>
      </Actions>
    </Dialog>
  </Overlay>
);

export default function App() {
  return (
    <>
      <GlobalStyle />
      <Desktop>
        <Window>
          <BrowserChrome />
          <Page>
            <ContactsHeader />
            <Body>
              <SideNav />
              <ContactList />
              <ScrollThumb />
            </Body>
            <ExportDialog />
          </Page>
        </Window>
      </Desktop>
    </>
  );
}
